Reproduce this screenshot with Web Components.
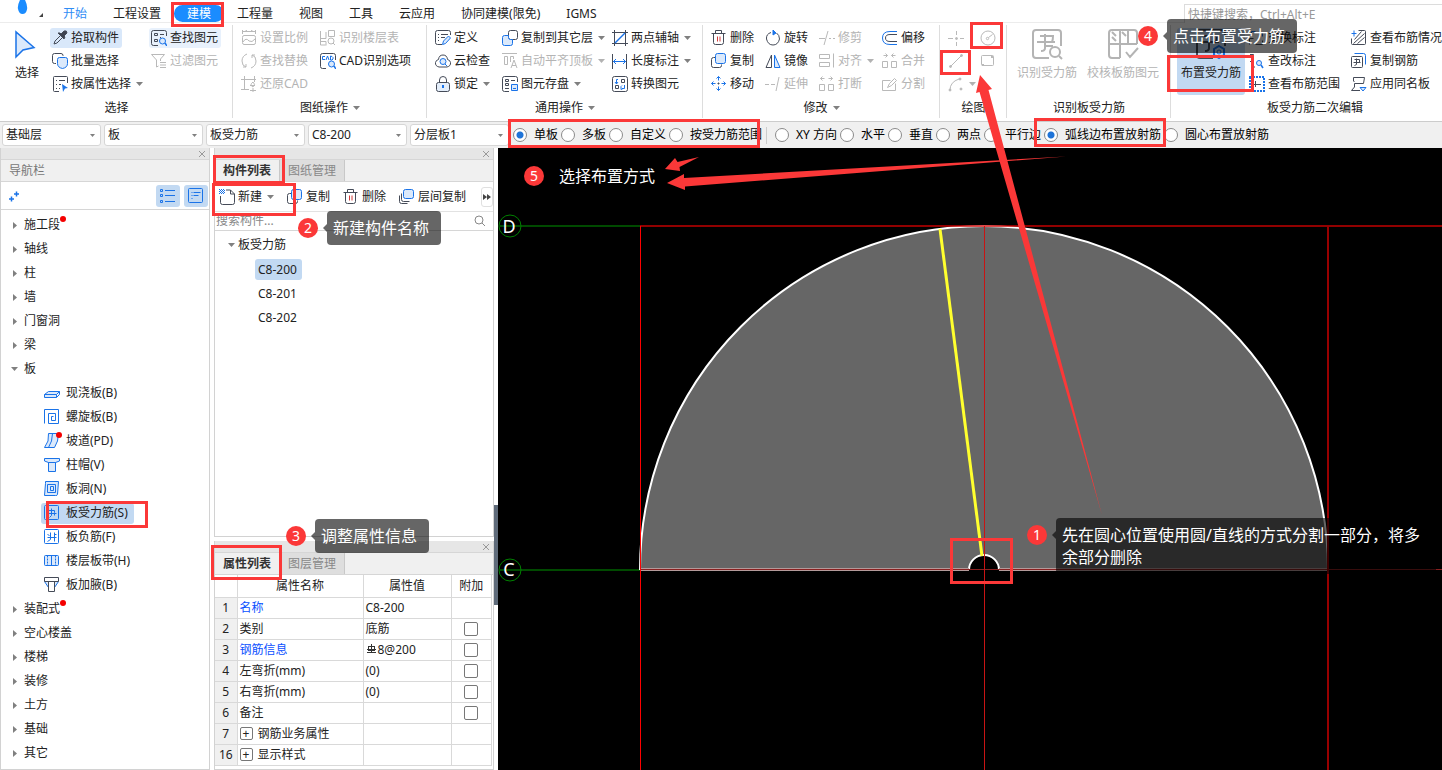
<!DOCTYPE html>
<html lang="zh-CN">
<head>
<meta charset="utf-8">
<title>建模 - 板受力筋</title>
<style>
html,body{margin:0;height:100%}
body{font:12px/20px "Noto Sans","Noto Sans CJK SC",sans-serif;color:#222;background:#fff;overflow:hidden}
</style>
</head>
<body>
<modeling-app></modeling-app>
<script>
const DROP = '<svg class="drop" width="7" height="4" viewBox="0 0 7 4" aria-hidden="true"><path d="M0 0H7L3.5 4Z" fill="#808080"/></svg>';
const ICONS = {
  pick:'<path d="M2 14l1-3 6-6 2 2-6 6-3 1Z"/><path fill="#3d4350" d="M8 3l1 1 3-3q3-1 3 2l-3 3 1 1-1 2-6-6Z"/>',
  batch:'<path d="M4 10.500H2.500a2 2 0 0 1-2-2V2.500a2 2 0 0 1 2-2H9a2 2 0 0 1 2 2V3"/><path class="b f" d="M5.500 6.500a2 2 0 0 1 2-2h6a2 2 0 0 1 2 2v4q0 4-5 5-5-1-5-5Z"/>',
  attr:'<path d="M7 15.500H2.500a1 1 0 0 1-1-1v-13a1 1 0 0 1 1-1h12a1 1 0 0 1 1 1V7M4 4.500h1M7 4.500h6M4 8.500h1M7 8.500h2M4 12.500h1M7 12.500h1"/><path fill="#1a73e8" stroke="none" d="M10 8l6 4-3 .5-2 3.500Z"/>',
  find:'<path d="M7 15.500H2.500a2 2 0 0 1-2-2v-11a2 2 0 0 1 2-2h11a2 2 0 0 1 2 2V6M3.500 3.500h3v2h-3ZM3.500 9.500h3v2h-3ZM9 4.500h4M9 7.500h1"/><circle class="b f" cx="11.500" cy="11" r="3"/><path class="b" stroke-width="1.500" d="M14 13l2 3"/>',
  filter:'<path d="M.5 1.500h13L9.500 6v2M.5 1.500l5 5.500V14l2-1M9 9.500h6M9 12h6M9 14.500h6"/>',
  scale:'<path d="M1 1.500h14M1.500 0v4M14.500 0v4M4 1.500L6 0M12 1.500L10 0M3 5.500h10q1.500 0 1.500 2v5q0 2-1.500 2H3q-1.500 0-1.500-2v-5q0-2 1.500-2M2 12q3-5 6-1 3 2 6-2"/>',
  swap:'<path d="M6 1Q1 3 1 8t4 6M10 15q5-2 5-7T11 2M5 14H2M5 14v-3M11 2h3M11 2v3"/>',
  restore:'<path d="M3.500 0v13M0 3.500h15M13.500 0v6M0 13.500h8M12 6q-4 3 0 5 3-3 0-5M9 9.500h5M12 12v4M9 14.500h6"/>',
  floors:'<path d="M.5 1v14h5M1 8.500h5V2M8.500 .5h6v6h-6ZM1 11.500h5v4"/><circle cx="11" cy="11" r="3"/><path d="M13 13l2 2"/>',
  cad:'<path d="M6 15.500H2.500a2 2 0 0 1-2-2v-11a2 2 0 0 1 2-2h11a2 2 0 0 1 2 2V7"/><path class="b" d="M5 3.500H2.500v3H5M6 7l1.500-4L9 7M10.500 3v4H12l1-1V4.500L12 3.500Z"/><circle class="b f" cx="11.500" cy="11" r="3"/><path class="b" stroke-width="1.500" d="M14 13l2 3"/>',
  define:'<path d="M7 14.500H2.500a2 2 0 0 1-2-2v-10a2 2 0 0 1 2-2h11a2 2 0 0 1 2 2V5M3 4.500h1M6 4.500h7M3 7.500h1M6 7.500h4M3 10.500h1"/><path class="b f" d="M7.500 14.500l1-3.500 5-5 2 2-5 5.500Z"/>',
  cloud:'<path d="M4 14Q0 13 .5 9.500 1 7 3.500 6.500 4 2 8 2t4.500 4.500Q15 7 15.500 9.500 16 13 12 14Z"/><circle class="b f" cx="8" cy="8.500" r="3"/><path class="b" d="M10 11l2 2"/>',
  lock:'<rect class="f2" x="1.500" y="6.500" width="13" height="9" rx="2"/><path d="M4.500 6V4q0-3.500 3.500-3.500T11.500 4v2"/><path class="b" stroke-width="2" d="M8 9v3"/>',
  copyfloor:'<rect x="6.500" y=".5" width="9" height="9" rx="2"/><path class="b f" d="M6.500 5.500h-4a2 2 0 0 0-2 2v6a2 2 0 0 0 2 2h6a2 2 0 0 0 2-2v-4h-2a2 2 0 0 1-2-2Z"/>',
  align:'<path d="M0 .5h15M2.500 3.500h3v8h-3ZM8.500 9V3.500h3V6M9 15l3-8 3 8M10 12.500h4"/>',
  save:'<path d="M7 15.500H2.500a2 2 0 0 1-2-2v-11a2 2 0 0 1 2-2h11a2 2 0 0 1 2 2V6M3.500 3.500h3v2h-3ZM3.500 7.500h3v2h-3ZM3 12.500h4M9 4.500h4"/><path class="b f" d="M9.500 8.500h6v6h-6ZM11 12.500h3"/>',
  axis:'<path d="M2.500 0v16M13.500 0v16M0 2.500h16M0 13.500h16"/><path class="b" stroke-width="1.500" d="M3 13L13 3"/>',
  length:'<path d="M.5 1v15M14.500 1v15"/><path class="b" d="M1 8.500h13M4 6L1.500 8.500 4 11M11 6l2.500 2.500L11 11"/>',
  convert:'<rect x=".5" y=".5" width="15" height="15" rx="2"/><path d="M9.500 3.500h3v3h-3ZM3.500 9.500h3v3h-3Z"/><path class="b" d="M6 3.500H4.500V8M3 6l1.500 2L6 6M10 12.500h2.500V9M10 9.500l-1 1v3l2-1"/>',
  del:'<path d="M1 4h14M5 4V1h6v3M3 4v9q0 2 2 2h6q2 0 2-2V4"/><path stroke="#d23b3b" d="M7 7v5M9.500 7v5"/>',
  copy:'<path d="M4.500 5H3A2 2 0 0 0 1 7v6a2 2 0 0 0 2 2h6a2 2 0 0 0 2-2v-1"/><rect class="b f" x="5" y="1" width="10" height="10" rx="2"/>',
  move:'<path class="b" d="M8 1v4M8 11v4M1 8h4M11 8h4M6 3l2-2 2 2M6 13l2 2 2-2M3 6L1 8l2 2M13 6l2 2-2 2"/><path d="M7 8h2M8 7v2"/>',
  rotate:'<path d="M6 2.500Q1 4 1.500 9 3 15 8 15t6.500-6Q14.500 5 11.500 3"/><path class="b" fill="#1a73e8" d="M8 0l3 3-3 2Z"/>',
  mirror:'<path d="M6.500 2v12.500H1Z"/><path class="b f" d="M9.500 2v12.500H15Z"/>',
  trim:'<path d="M0 8.500h6M10 8.500h2M14 8.500h2M9 1L5 15"/>',
  alignobj:'<path d="M1 2h10v4H1ZM1 10h10v4H1ZM15 1v14"/>',
  extend:'<path d="M0 8.500h4M6 8.500h4M14 1l-3 14"/>',
  brk:'<path d="M1 9h5v6H1ZM10 9h5v6h-5ZM2 3h4M4 1L2 3l2 2M10 3h4M12 1l2 2-2 2"/>',
  offset:'<path class="b" d="M15 1.500H8Q.5 1.500 .5 8T8 14.500h7"/><path d="M15 4.500H8Q3.500 4.500 3.500 8T8 11.500h7"/>',
  merge:'<path d="M1 9h5v6H1ZM10 9h5v6h-5ZM2 3h4M4 1l2 2-2 2M14 3h-4M12 1l-2 2 2 2"/>',
  split:'<path d="M9 5H1v10h13V8M6 12l2-4 5-5 2 2-5 5Z"/>',
  point:'<path d="M8.500 1v4M8.500 12v4M0 8.500h5M12 8.500h4"/><circle cx="8.500" cy="8.500" r="1" fill="currentColor"/>',
  circle:'<circle cx="8" cy="8" r="7"/><circle cx="7.500" cy="8.500" r="1.200"/><path d="M8.500 7.500l4-3"/>',
  line:'<path d="M3 13L13 3"/><circle cx="2.500" cy="13.500" r="1" fill="currentColor"/><circle cx="13.500" cy="2.500" r="1" fill="currentColor"/>',
  rect:'<rect x="1.500" y="2.500" width="12" height="10" rx="1"/><path stroke-width="2" d="M2 12h2M11 4h2"/>',
  arc:'<path d="M2 14Q2 6 11 3"/><circle cx="2" cy="14" r="1" fill="currentColor"/><circle cx="12" cy="3" r="1" fill="currentColor"/><circle cx="13" cy="13" r="1" fill="currentColor"/>',
  exch:'<path d="M1 15V9h4M7 15h7v-4"/><path class="b" d="M3 6V2h4M10 3h4v4"/>',
  edit:'<path d="M1 1.500h3.500V6M3.500 8v6H6M1 8.500h4"/><circle class="b f" cx="10" cy="10" r="2.500"/><path class="b" stroke-width="1.500" d="M12 12l2 3"/>',
  range:'<rect class="b" x="1" y="1" width="14" height="14" stroke-dasharray="2 1" stroke-width="2"/><path d="M5 8.500h7M6.500 5v6"/>',
  status:'<path d="M8 1h6q1 0 1 1v12q0 1-1 1H2q-1 0-1-1V9M3 14L14 4M7 14l7-6M4 10l7-8"/><path class="b" d="M1 4h5M3.500 1v6"/>',
  copyrebar:'<path class="b" d="M4 1h9q2 0 2 2v9"/><rect x="1" y="4" width="11" height="11" rx="1"/><path d="M4 7h5v3M3 10h7M6 6v6l-2 1"/>',
  same:'<path d="M3.500 6l-1-1V1.500h11l-1 6h-9V11l-3 3.500H9"/><path class="b f" d="M9 11.500h6l-3 3.500Z"/>',
  cursor:'<path class="b f" stroke-width="1.500" d="M5 4v25l7-7 11-2.500Z"/>',
  bigfind:'<path stroke-width="2" d="M18 30H5q-3 0-3-3V5q0-3 3-3h22q3 0 3 3v13M9 8h13q0 4-1 6M6 14h18M14 6v14q0 3-4 3M14 18h8"/><circle cx="24" cy="24" r="5" stroke-width="2"/><path stroke-width="2" d="M28 28l3 3"/>',
  bigcheck:'<path stroke-width="2" d="M13 30H5q-3 0-3-3V5q0-3 3-3h22q3 0 3 3v11M13 2v28M2 16h28M21 2v14M5 4l4 4M5 9l4 4M15 4l4 4M19 24l4 5 8-9"/>',
  bigset:'<path stroke-width="2" d="M18 30H5q-3 0-3-3V5q0-3 3-3h22q3 0 3 3v13M9 8h13q0 4-1 6M6 14h18M14 6v14q0 3-4 3"/><path class="b" stroke-width="2" fill="#c2d9f2" d="M24 18l5 3v6l-5 3-5-3v-6Z"/><circle class="b" cx="24" cy="24" r="2"/>',
  newdoc:'<path d="M1.500 7v6.500q0 2 2 2h10q2 0 2-2V5l-4-4H7M11.500 1v4h4"/><path class="b" stroke-dasharray="1 1" d="M0 .5h5M1 1.500h5M0 2.500h5M1 3.500h5M0 4.500h5"/>',
  layer:'<path d="M3 5v6q0 2 2 2h6M1 7v6q0 2 2 2h6"/><rect class="b f" x="5" y="1" width="10" height="9" rx="2"/>',
  slab:'<path class="b f" d="M.5 9.500l4-3h11l-3 3ZM.5 9.500v3h12v-3M15.500 6.500v3l-3 3"/>',
  spiral:'<path class="b" d="M1 15V1h14v14H5V5h7v7H8V8h2"/>',
  ramp:'<path class="b f" d="M5 1h10q0 8-4 14H1Q6 9 5 1"/><path class="b" d="M9 1q0 8-4 14"/>',
  cap:'<path class="b f" d="M.5 1.500h15V4l-4 1.500h-7L.5 4ZM4.500 5.500h7v9h-7Z"/>',
  hole:'<path class="b f" d="M2 1h13l-1 13q0 1-2 1H1l1-12ZM4 4h8v8H4Z"/><path class="b" d="M7 6h3v4H7Z"/>',
  rebar:'<rect class="b" x="1" y="1" width="14" height="14" rx="1"/><path class="b" d="M5 6h6v2M4 9h9M8 4v7l-2 2M11 8v3"/>',
  neg:'<rect class="b" x="1" y="1" width="14" height="14" rx="1"/><path class="b" d="M4 9h9M7 4v7l-3 2M11 4v9M4 6l2 1M11 6h2"/>',
  band:'<rect class="b f" x="1" y="3" width="14" height="10" rx="1"/><path class="b" stroke-dasharray="2 1" d="M4 3v10M12 3v10"/><path class="b" d="M8 3v10"/>',
  haunch:'<path class="b f" d="M1 5l4 6V5M15 5l-4 6V5"/><path d="M1 1h14v4H1ZM5 5v10h6V5"/>',
  plus:'<path class="b" stroke-width="1.500" d="M1 10h5M3.500 7.500v5M6 5h5M8.500 2.500v5"/>',
  list:'<g class="b"><path d="M5 2.500h10M5 7.500h10M5 13.500h10"/><path d="M.5 1.500h2v2h-2ZM.5 6.500h2v2h-2ZM.5 12.500h2v2h-2Z"/></g>',
  card:'<rect class="b" x="1" y="1" width="14" height="14" rx="1"/><path class="b" d="M4 5h1M6 5h7M4 8h1M6 8h5M4 11h1"/>',
  search:'<circle cx="7" cy="7" r="4"/><path d="M10 10l3 3"/>'
};
/* Icons drawn on whole units move half a unit so that their strokes fall on pixels. */
const HALF = new Set(['del','copy','move','alignobj','brk','merge','split','status','copyrebar','layer','spiral','ramp','hole','rebar','neg','band','haunch','card','exch']);
const glyph = (name, size = 16, box = size) =>
  `<svg class="ic" width="${size}" height="${size}" viewBox="0 0 ${box} ${box}" aria-hidden="true">${HALF.has(name) ? `<g transform="translate(-.5 -.5)">${ICONS[name]}</g>` : ICONS[name]}</svg>`;
const BASE = `<style>
*{box-sizing:border-box}
:host{display:block}
svg{display:block;flex:none}
button,input,select{font:inherit;color:inherit;margin:0}
button{border:0;background:none;padding:0;text-align:left;white-space:nowrap}
.ic{fill:none;stroke:currentColor;stroke-width:1}
.b{stroke:#1a73e8}.f{fill:#dbe9fb}.f2{fill:#e4eefa}
</style>`;
function define(tag, render) {
  customElements.define(tag, class extends HTMLElement {
    connectedCallback() {
      if (this.shadowRoot) return;
      this.attachShadow({mode: 'open'}).innerHTML = BASE + render(this, n => this.getAttribute(n) || '', n => this.hasAttribute(n));
    }
  });
}

define('menu-tab', (el, at, has) => `<style>
:host{height:22px;padding-top:5px}
button{display:block;padding:0 13px;height:17px;line-height:17px;border-radius:9px}
button.blue{color:#2f8df5}
button.on{background:#1a8cff;color:#fff}
</style><button class="${at('tone')}"><slot></slot></button>`);

define('tool-button', (el, at, has) => `<style>
button{display:flex;align-items:center;height:20px;padding:0 3px 0 2px;gap:3px;border-radius:3px;color:#222}
.ic{color:#454b58}
button:disabled{color:#b4b4b4}
button:disabled .ic{color:#b9b9b9}
.drop{margin-left:2px}
button:disabled .drop{opacity:.6}
.hot{background:#d9e8fa}.warm{background:#e8f1fc}
</style><button class="${at('tone')}" ${has('off') ? 'disabled' : ''} aria-label="${at('label') || el.textContent.trim()}">${glyph(at('icon'))}<slot></slot>${has('menu') ? DROP : ''}</button>`);

define('tall-button', (el, at, has) => `<style>
button{display:flex;flex-direction:column;align-items:center;width:100%;height:67px;color:#222;border-radius:3px}
.ic{color:#454b58}
button:disabled,button:disabled .ic{color:#b4b4b4}
span{line-height:26px}
.on{background:#c2d9f2}
</style><button class="${at('tone')}" ${has('off') ? 'disabled' : ''}>${glyph(at('icon'), 32)}<span><slot></slot></span></button>`);

define('ribbon-group', (el, at, has) => `<style>
:host{flex:none;position:relative;padding-top:3px}
:host::after{content:"";position:absolute;right:0;top:2px;bottom:3px;width:1px;background:#ddd}
.tools{display:grid;grid-template-rows:repeat(3,23px);grid-auto-flow:column;align-items:center;grid-template-columns:${at('columns')};height:69px}
::slotted(tall-button){grid-row:1/4;align-self:start;padding-top:2px}
.name{display:flex;align-items:center;justify-content:center;gap:5px;height:26px}
</style><div class="tools"><slot></slot></div><div class="name">${at('name')}${has('menu') ? DROP : ''}</div>`);

define('combo-box', (el, at) => `<style>
:host{position:relative;width:99px;flex:none}
select{display:block;width:100%;height:22px;appearance:none;border:1px solid #d6d6d6;border-radius:3px;background:#fff;padding:0 3px;outline:0}
.drop{position:absolute;right:6px;top:10px;width:5px;height:3px;pointer-events:none}
</style><select aria-label="${at('label')}"><option>${at('value')}</option></select>${DROP}`);

define('radio-strip', (el, at) => `<style>
:host{display:flex;gap:3px;flex:none;color:#000}
label{display:flex;align-items:center;gap:7px;white-space:nowrap}
input{appearance:none;width:14px;height:14px;border:1px solid #8a8a8a;border-radius:50%;background:#fff}
input:checked{background:radial-gradient(circle,#1f74d8 0 3px,#fff 4px)}
</style>${at('options').split(',').map((t, i) => `<label><input type="radio" name="r" ${String(i) === at('selected') ? 'checked' : ''}>${t}</label>`).join('')}`);

define('dock-panel', (el, at) => `<style>
:host{display:flex;flex-direction:column;border:1px solid #d2d2d2;border-top:0;background:#fff;min-height:0}
.strip{display:flex;justify-content:flex-end;align-items:center;height:12px;background:#e6e6e6;border-bottom:1px solid #d6d6d6;padding-right:3px;flex:none}
.head{display:flex;height:22px;background:#f0f0f0;border-bottom:1px solid #d6d6d6;flex:none;line-height:22px}
.title{color:#777;padding-left:8px}
.tab{padding:0 8px;color:#888;background:#dedede;border-right:1px solid #c8c8c8}
.tab.on{font-weight:bold;color:#333;background:#f0f0f0}
</style><div class="strip"><button aria-label="关闭"><svg width="8" height="8" viewBox="0 0 8 8" stroke="#999"><path d="M1 1l6 6M7 1L1 7"/></svg></button></div>
<div class="head">${at('heading') ? `<span class="title">${at('heading')}</span>` : at('tabs').split(',').map((t, i) => `<button class="tab ${i ? '' : 'on'}">${t}</button>`).join('')}</div><slot></slot>`);

define('tree-item', (el, at, has) => `<style>
:host{display:flex;align-items:center;height:24px;padding-left:${has('child') ? 40 : 10}px}
.row{display:flex;align-items:center;height:21px;border-radius:3px;position:relative}
.leaf{padding:0 6px 0 3px;gap:6px}
.top{gap:6px}
.tw{width:7px;display:flex;justify-content:center}
.on{background:#c2d9f2}
.dot{position:absolute;width:6px;height:6px;border-radius:50%;background:#f40000;top:1px;left:${has('child') ? '15px' : '100%'}}
.ic{color:#454b58}
</style><div role="treeitem" class="row ${has('child') ? 'leaf' : 'top'} ${has('selected') ? 'on' : ''}">${has('child') ? glyph(at('icon')) :
`<span class="tw">${has('open') ? DROP : '<svg width="4" height="7"><path d="M0 0L4 3.500 0 7Z" fill="#808080"/></svg>'}</span>`}<slot></slot>${has('dot') ? '<i class="dot"></i>' : ''}</div>`);

define('nav-tools', () => `<style>
:host{display:flex;align-items:center;gap:4px;height:28px;padding:0 1px 0 7px;border-bottom:1px solid #d6d6d6;margin-bottom:3px;flex:none}
.add{margin-right:auto}
.sq{display:grid;place-items:center;width:24px;height:22px;border-radius:3px;background:#c2d9f2}
</style><button class="add" aria-label="添加">${glyph('plus', 14)}</button><button class="sq" aria-label="列表">${glyph('list')}</button><button class="sq" aria-label="卡片">${glyph('card')}</button>`);

define('component-list', () => `<style>
.bar{display:grid;grid-template-columns:68px 56px 56px 1fr 12px;align-items:center;height:30px;padding-left:2px;border-bottom:1px solid #e2e2e2}
.more{height:20px;border:1px solid #e0e0e0;border-radius:3px;display:grid;place-items:center}
.find{display:flex;align-items:center;height:19px;border-bottom:1px solid #d6d6d6;padding-right:5px;color:#888}
input{flex:1;min-width:0;border:0;outline:0;height:18px;padding:0 1px;line-height:18px}
input::placeholder{color:#888;opacity:1}
.tree{padding-top:2px}
.root,.item{display:flex;align-items:center;height:24px}
.root{padding-left:13px;gap:3px}
.item{padding-left:40px}
.item span{padding:0 5px 0 3px;border-radius:3px;height:21px;line-height:21px}
.item .on{background:#c2d9f2}
</style><div class="bar"><tool-button icon="newdoc" menu>新建</tool-button><tool-button icon="copy">复制</tool-button><tool-button icon="del">删除</tool-button><tool-button icon="layer">层间复制</tool-button>
<button class="more" aria-label="更多"><svg width="8" height="6"><path d="M0 0l4 3-4 3ZM4 0l4 3-4 3Z" fill="#444"/></svg></button></div>
<div class="find"><input placeholder="搜索构件..." aria-label="搜索构件">${glyph('search')}</div>
<div class="tree" role="tree"><div class="root">${DROP}板受力筋</div>
<div class="item"><span class="on">C8-200</span></div><div class="item"><span>C8-201</span></div><div class="item"><span>C8-202</span></div></div>`);

const PROPS = [
  ['1', '<a href="#name">名称</a>', 'C8-200', 0], ['2', '类别', '底筋', 1],
  ['3', '<a href="#rebar">钢筋信息</a>', '<span class="bar"><svg width="11" height="14" viewBox="0 0 11 14" fill="none" stroke="#333"><path d="M5.500 1v9M1 9.500h9M1 6.500h9"/><rect x="2.500" y="3.500" width="6" height="4"/></svg>8@200</span>', 1],
  ['4', '左弯折(mm)', '(0)', 1], ['5', '右弯折(mm)', '(0)', 1], ['6', '备注', '', 1],
  ['7', '<span class="ex"><button aria-label="展开">+</button>钢筋业务属性</span>', '', 0],
  ['16', '<span class="ex"><button aria-label="展开">+</button>显示样式</span>', '', 0]];
define('property-table', () => `<style>
table{border-collapse:collapse;table-layout:fixed;width:277px}
th,td{border:1px solid #d9d9d9;border-top:0;padding:0 2px;height:21px;line-height:20px;font-weight:normal;text-align:left;white-space:nowrap}
thead th{height:22px;line-height:21px;text-align:center}
tbody th{background:#f0f0f0;text-align:center;padding:0}
tr>:first-child{border-left:0}
td:last-child{text-align:center}
a{color:#0a50ff;text-decoration:none}
input{appearance:none;width:14px;height:14px;border:1px solid #777;border-radius:2px;background:#fff;display:block;margin:0 auto}
.bar,.ex{display:flex;align-items:center;gap:1px;height:20px}
.ex{gap:5px}
.ex button{width:13px;height:13px;border:1px solid #777;border-radius:2px;line-height:10px;text-align:center}
</style><table><colgroup><col style="width:22px"><col style="width:126px"><col style="width:88px"><col></colgroup>
<thead><tr><th></th><th>属性名称</th><th>属性值</th><th>附加</th></tr></thead>
<tbody>${PROPS.map(r => `<tr><th scope="row">${r[0]}</th><td>${r[1]}</td><td>${r[2]}</td><td>${r[3] ? `<input type="checkbox" aria-label="附加 ${r[0]}">` : ''}</td></tr>`).join('')}</tbody></table>`);

define('cad-view', () => `<style>
:host{background:#000;overflow:hidden;min-width:0;position:relative}
svg{position:absolute;inset:0;width:100%;height:100%}
text{font-size:18px;fill:#fff;text-anchor:middle}
</style><svg viewBox="498 148 944 622" preserveAspectRatio="xMinYMin slice" fill="none">
<path d="M500 226H640M500 570H640" stroke="#004a00" stroke-width="2"/>
<path d="M640 570A344 344 0 0 1 1328 570H999A15 15 0 0 0 969 570Z" fill="#666"/>
<path d="M640 570A344 344 0 0 1 1328 570" stroke="#fff" stroke-width="2"/>
<path d="M969 570A15 15 0 0 1 999 570" stroke="#fff" stroke-width="2"/>
<path d="M640 226H1442" stroke="#d00000" stroke-opacity=".7" stroke-width="2"/>
<path d="M641 569.500H969M999 569.500H1328" stroke="#b39a9a" stroke-width="3"/>
<path d="M640 569.500H1442" stroke="#8a2020"/>
<path d="M640.500 226V770" stroke="#f00"/>
<path d="M984.500 226V770" stroke="#c81414"/>
<path d="M1328 226V770" stroke="#980000" stroke-width="2"/>
<path d="M940 229L982 556" stroke="#ffff2e" stroke-width="3"/>
<circle cx="510" cy="226" r="11" stroke="#008000"/><circle cx="510" cy="570" r="11" stroke="#008000"/>
<text x="509" y="233">D</text><text x="509" y="576">C</text></svg>`);

/* Red frame laid over the controls that a step refers to. */
define('mark-frame', (el, at) => {
  const [x, y, w, h] = at('box').split(' ');
  return `<style>:host{position:absolute;left:${x}px;top:${y}px;width:${w}px;height:${h}px;border:3px solid #fb3838}</style>`;
});
/* Numbered step with its caption. */
define('step-note', (el, at, has) => {
  const [x, y] = at('at').split(' ');
  return `<style>
:host{position:absolute;left:${x}px;top:${y}px;display:flex;align-items:flex-start;gap:9px;color:#fff}
b{width:20px;height:20px;border-radius:50%;background:#fb3838;font:14px/20px "Noto Sans",sans-serif;text-align:center;margin-top:7px;flex:none}
p{margin:0;position:relative;padding:6px 12px 6px 6px;font-size:16px;line-height:22px;background:${has('plain') ? 'none' : 'rgba(0,0,0,.6)'};border-radius:4px;max-width:380px}
p::before{content:"";position:absolute;left:-4px;top:13px;border:4px solid transparent;border-left:0;border-right-color:${has('plain') ? 'transparent' : 'rgba(0,0,0,.6)'}}
</style><b>${at('step')}</b><p><slot></slot></p>`;
});
define('mark-arrows', () => `<style>:host{position:absolute;inset:0;overflow:hidden;pointer-events:none}svg{position:absolute;left:0;top:0}</style>
<svg width="1442" height="770" fill="#fb3838" aria-hidden="true">
<path d="M980 75L992 89 988.500 90 1102 515 979.500 92 976 93Z"/>
<path d="M667 183L684 174 684 178 1066 156.500 685 186.500 685 190Z"/>
<path d="M665 169L675 158 677.500 162 699 157 679.500 167 680 171Z"/></svg>`);

define('modeling-app', () => `<style>
:host{display:flex;flex-direction:column;height:100vh;position:relative;overflow:hidden}
.menu{display:flex;height:23px;border-bottom:1px solid #ececec;flex:none}
.logo{width:50px;flex:none;padding-left:16px}
.find{margin-left:auto;width:258px;height:19px;margin-top:4px;border:1px solid #dcdcdc;border-right:0;border-bottom:0;padding:0 3px;outline:0;flex:none;line-height:17px}
.find::placeholder{color:#999;opacity:1}
.ribbon{display:flex;height:98px;overflow:hidden;flex:none}
.filter{display:flex;align-items:center;gap:3px;height:27px;background:#f0f0f0;border-top:1px solid #ccc;padding-left:2px;flex:none}
.filter radio-strip:first-of-type{margin-left:1px}
.filter hr{margin:0 1px;width:1px;height:17px;border:0;background:#ccc}
.filter hr+radio-strip{margin-left:4px}
main{display:grid;grid-template-columns:210px 284px 4px minmax(0,1fr);flex:1;min-height:0}
.mid{display:grid;grid-template-rows:389px minmax(0,1fr);gap:4px;min-height:0;margin-left:4px}
.grip{background:linear-gradient(#5f6b7a,#5f6b7a) 0 357px/4px 100px no-repeat #fff}
dock-panel{overflow:hidden}
</style>
<nav class="menu"><div class="logo"><svg width="30" height="20" viewBox="0 0 30 20"><path d="M5.500-3Q1 5 2 9q1 5 4.500 5T11 9.500Q12 5 7.500-3Z" fill="#1a8cff"/><path d="M27 13v4h-4Z" fill="#444"/></svg></div>
<menu-tab tone="blue">开始</menu-tab><menu-tab>工程设置</menu-tab><menu-tab tone="on">建模</menu-tab><menu-tab>工程量</menu-tab><menu-tab>视图</menu-tab><menu-tab>工具</menu-tab><menu-tab>云应用</menu-tab><menu-tab>协同建模(限免)</menu-tab><menu-tab>IGMS</menu-tab>
<input class="find" placeholder="快捷键搜索，Ctrl+Alt+E" aria-label="快捷键搜索"></nav>
<div class="ribbon">
<ribbon-group name="选择" style="width:233px" columns="6px 42px 2px 99px 84px"><i style="grid-row:1/4"></i><tall-button icon="cursor">选择</tall-button><i style="grid-row:1/4"></i>
<tool-button icon="pick" tone="hot">拾取构件</tool-button><tool-button icon="batch">批量选择</tool-button><tool-button icon="attr" menu>按属性选择</tool-button>
<tool-button icon="find" tone="warm">查找图元</tool-button><tool-button icon="filter" off>过滤图元</tool-button></ribbon-group>
<ribbon-group name="图纸操作" menu style="width:194px" columns="6px 79px 109px"><i style="grid-row:1/4"></i>
<tool-button icon="scale" off>设置比例</tool-button><tool-button icon="swap" off>查找替换</tool-button><tool-button icon="restore" off>还原CAD</tool-button>
<tool-button icon="floors" off>识别楼层表</tool-button><tool-button icon="cad">CAD识别选项</tool-button></ribbon-group>
<ribbon-group name="通用操作" menu style="width:276px" columns="6px 67px 110px 93px"><i style="grid-row:1/4"></i>
<tool-button icon="define">定义</tool-button><tool-button icon="cloud">云检查</tool-button><tool-button icon="lock" menu>锁定</tool-button>
<tool-button icon="copyfloor" menu>复制到其它层</tool-button><tool-button icon="align" off menu>自动平齐顶板</tool-button><tool-button icon="save" menu>图元存盘</tool-button>
<tool-button icon="axis" menu>两点辅轴</tool-button><tool-button icon="length" menu>长度标注</tool-button><tool-button icon="convert">转换图元</tool-button></ribbon-group>
<ribbon-group name="修改" menu style="width:237px" columns="6px 54px 54px 63px 60px"><i style="grid-row:1/4"></i>
<tool-button icon="del">删除</tool-button><tool-button icon="copy">复制</tool-button><tool-button icon="move">移动</tool-button>
<tool-button icon="rotate">旋转</tool-button><tool-button icon="mirror">镜像</tool-button><tool-button icon="extend" off>延伸</tool-button>
<tool-button icon="trim" off>修剪</tool-button><tool-button icon="alignobj" off menu>对齐</tool-button><tool-button icon="brk" off>打断</tool-button>
<tool-button icon="offset">偏移</tool-button><tool-button icon="merge" off>合并</tool-button><tool-button icon="split" off>分割</tool-button></ribbon-group>
<ribbon-group name="绘图" style="width:67px" columns="6px 32px 29px"><i style="grid-row:1/4"></i>
<tool-button icon="point" label="点" off></tool-button><tool-button icon="line" label="直线" off></tool-button><tool-button icon="arc" label="弧" off menu></tool-button>
<tool-button icon="circle" label="圆" off></tool-button><tool-button icon="rect" label="矩形" off></tool-button></ribbon-group>
<ribbon-group name="识别板受力筋" style="width:164px" columns="4px 72px 80px 8px"><i style="grid-row:1/4"></i>
<tall-button icon="bigfind" off>识别受力筋</tall-button><tall-button icon="bigcheck" off>校核板筋图元</tall-button></ribbon-group>
<ribbon-group name="板受力筋二次编辑" style="width:288px" columns="6px 68px 2px 102px 110px"><i style="grid-row:1/4"></i>
<tall-button icon="bigset" tone="on">布置受力筋</tall-button><i style="grid-row:1/4"></i>
<tool-button icon="exch">交换标注</tool-button><tool-button icon="edit">查改标注</tool-button><tool-button icon="range">查看布筋范围</tool-button>
<tool-button icon="status">查看布筋情况</tool-button><tool-button icon="copyrebar">复制钢筋</tool-button><tool-button icon="same">应用同名板</tool-button></ribbon-group>
</div>
<div class="filter"><combo-box label="楼层" value="基础层"></combo-box><combo-box label="类别" value="板"></combo-box><combo-box label="构件类型" value="板受力筋"></combo-box><combo-box label="构件" value="C8-200"></combo-box><combo-box label="分层" value="分层板1"></combo-box>
<radio-strip options="单板,多板,自定义,按受力筋范围" selected="0"></radio-strip><hr><radio-strip options="XY 方向,水平,垂直,两点,平行边,弧线边布置放射筋,圆心布置放射筋" selected="5"></radio-strip></div>
<main>
<dock-panel heading="导航栏"><nav-tools></nav-tools>
<tree-item dot>施工段</tree-item><tree-item>轴线</tree-item><tree-item>柱</tree-item><tree-item>墙</tree-item><tree-item>门窗洞</tree-item><tree-item>梁</tree-item><tree-item open>板</tree-item>
<tree-item child icon="slab">现浇板(B)</tree-item><tree-item child icon="spiral">螺旋板(B)</tree-item><tree-item child icon="ramp" dot>坡道(PD)</tree-item><tree-item child icon="cap">柱帽(V)</tree-item><tree-item child icon="hole">板洞(N)</tree-item><tree-item child icon="rebar" selected>板受力筋(S)</tree-item><tree-item child icon="neg">板负筋(F)</tree-item><tree-item child icon="band">楼层板带(H)</tree-item><tree-item child icon="haunch">板加腋(B)</tree-item>
<tree-item dot>装配式</tree-item><tree-item>空心楼盖</tree-item><tree-item>楼梯</tree-item><tree-item>装修</tree-item><tree-item>土方</tree-item><tree-item>基础</tree-item><tree-item>其它</tree-item></dock-panel>
<div class="mid"><dock-panel tabs="构件列表,图纸管理"><component-list></component-list></dock-panel><dock-panel tabs="属性列表,图层管理"><property-table></property-table></dock-panel></div>
<div class="grip"></div>
<cad-view></cad-view>
</main>
<mark-frame box="171 2 53 25"></mark-frame><mark-frame box="970 22 33 27"></mark-frame><mark-frame box="940 50 31 25"></mark-frame>
<mark-frame box="508 119 252 29"></mark-frame><mark-frame box="1034 118 132 29"></mark-frame><mark-frame box="1167 55 87 37"></mark-frame>
<mark-frame box="213 155 72 29"></mark-frame><mark-frame box="212 183 84 33"></mark-frame><mark-frame box="46 501 102 27"></mark-frame>
<mark-frame box="211 545 71 35"></mark-frame><mark-frame box="950 538 63 46"></mark-frame>
<mark-arrows></mark-arrows>
<step-note step="1" at="1027 518">先在圆心位置使用圆/直线的方式分割一部分，将多余部分删除</step-note>
<step-note step="2" at="298 211">新建构件名称</step-note><step-note step="3" at="286 519">调整属性信息</step-note>
<step-note step="4" at="1138 19">点击布置受力筋</step-note><step-note step="5" at="524 159" plain>选择布置方式</step-note>`);
</script>
</body>
</html>
